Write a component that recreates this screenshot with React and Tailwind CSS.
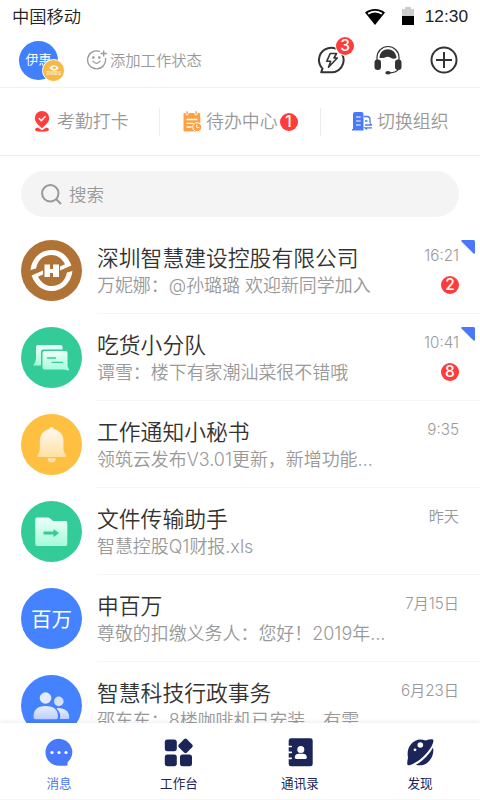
import React from 'react';

const chats = [
    { id: 1, name: '深圳智慧建设控股有限公司', text: '万妮娜：@孙璐璐 欢迎新同学加入', time: '16:21', unread: 2, pinned: true, icon: <CompanyLogo />, bg: 'bg-[#b07235]' },
    { id: 2, name: '吃货小分队', text: '谭雪：楼下有家潮汕菜很不错哦', time: '10:41', unread: 8, pinned: true, icon: <GroupChatIcon />, bg: 'bg-[#33cc99]' },
    { id: 3, name: '工作通知小秘书', text: '领筑云发布V3.01更新，新增功能…', time: '9:35', icon: <BellIcon />, bg: 'bg-[#ffbf40]' },
    { id: 4, name: '文件传输助手', text: '智慧控股Q1财报.xls', time: '昨天', icon: <FolderIcon />, bg: 'bg-[#33cc99]' },
    { id: 5, name: '申百万', text: '尊敬的扣缴义务人：您好！2019年…', time: '7月15日', icon: <span className="pt-[3px] text-[20.500px] leading-none font-normal text-white">百万</span>, bg: 'bg-[#4582ff]' },
    { id: 6, name: '智慧科技行政事务', text: '邵东东：8楼咖啡机已安装，有需', time: '6月23日', icon: <PeopleIcon />, bg: 'bg-[#4582ff]' },
];

const tabs = [
    { label: '消息', icon: <MessageTabIcon />, active: true },
    { label: '工作台', icon: <WorkTabIcon /> },
    { label: '通讯录', icon: <ContactsTabIcon /> },
    { label: '发现', icon: <DiscoverTabIcon /> },
];

function CompanyLogo() {
    return (
        <svg viewBox="0 0 61 61" className="size-full" fill="none">
            <path d="M9.500 30C11 18 19.500 10 30.500 10C39.500 10 46.500 15 50.500 25.500L39 30.500V26.500L44 24.300C40.500 18 36 15 30.500 15C22 15 17 20 15 28.500Z" fill="#fff" />
            <path d="M51.500 31C50 43 41.500 51 30.500 51C21.500 51 14.500 46 10.500 35.500L22 30.500V34.500L17 36.700C20.500 43 25 46 30.500 46C39 46 44 41 46 32.500Z" fill="#fff" />
            <path d="M23.500 24.500H29V29H32V24.500H38V37H32V33H29V37H23.500Z" fill="#fff" />
        </svg>
    );
}

function GroupChatIcon() {
    return (
        <svg viewBox="0 0 61 61" className="size-full" fill="none">
            <defs>
                <linearGradient id="mint" x1="0" y1="0" x2="0" y2="1">
                    <stop stopColor="#effff8" />
                    <stop offset="1" stopColor="#a3fbd9" />
                </linearGradient>
            </defs>
            <path d="M17 18H39.500Q41.500 18 41.500 20V22.500H22.500Q20 22.500 20 25V38.500H13Q12 38.500 12.600 37.500Q15 35 15 31V20Q15 18 17 18Z" fill="url(#mint)" />
            <path d="M23.500 24H44.500Q46.500 24 46.500 26V38Q46.500 40.500 48 42.500Q48.500 43.700 47 43.500L43 42.500H23.500Q21.500 42.500 21.500 40.500V26Q21.500 24 23.500 24Z" fill="url(#mint)" />
            <path d="M26.500 31H34.500M31 35.300H41.500" stroke="#33cc99" strokeWidth="1.300" strokeLinecap="round" />
        </svg>
    );
}

function BellIcon() {
    return (
        <svg viewBox="0 0 61 61" className="size-full" fill="none">
            <defs>
                <linearGradient id="bell" x1="0" y1="0" x2="0" y2="1">
                    <stop stopColor="#fffaf0" />
                    <stop offset="1" stopColor="#ffe0a3" />
                </linearGradient>
            </defs>
            <path d="M30.500 13Q32.600 13 33 15.300C39 16.500 42.500 21 42.500 27V35Q42.500 38 44.500 40.500Q46 43 44 43H17.500Q15.500 43 17 40.500Q18.800 38 18.800 35V27C18.800 21 22.300 16.500 28 15.300Q28.500 13 30.500 13Z" fill="url(#bell)" />
            <path d="M26.500 44.200H35Q34.500 48.500 30.700 48.500Q27 48.500 26.500 44.200Z" fill="#ffe2a8" />
        </svg>
    );
}

function FolderIcon() {
    return (
        <svg viewBox="0 0 61 61" className="size-full" fill="none">
            <path d="M16 16.500H27Q28 16.500 28.800 17.200L31.500 19.500Q32.200 20 33.200 20H44.500Q46.300 20 46.300 22V43Q46.300 45 44.500 45H16Q14.300 45 14.300 43V18.500Q14.300 16.500 16 16.500Z" fill="url(#mint)" />
            <path d="M22.500 30.600H32.500V28L38 32L32.500 36.200V33.600H22.500Z" fill="#33cc99" />
        </svg>
    );
}

function PeopleIcon() {
    return (
        <svg viewBox="0 0 61 61" className="size-full" fill="none">
            <defs>
                <linearGradient id="people" x1="0" y1="0" x2="0" y2="1">
                    <stop stopColor="#e9efff" />
                    <stop offset="1" stopColor="#bdcdff" />
                </linearGradient>
            </defs>
            <circle cx="24.500" cy="23" r="5.800" fill="#e3ebff" />
            <circle cx="37.800" cy="26.400" r="4.800" fill="#d5e0ff" />
            <path d="M37 33C44 33 48.300 36.500 48.300 42.500Q48.300 44 46.800 44H39Q40 38 36 34Q35 33 37 33Z" fill="url(#people)" />
            <path d="M12.500 42Q12.500 31 24.500 31Q37 31 37 42Q37 44.200 34.800 44.200H14.700Q12.500 44.200 12.500 42Z" fill="url(#people)" />
        </svg>
    );
}

function MessageTabIcon() {
    return (
        <svg viewBox="0 0 30 30" className="size-[30px]" fill="#4978fa">
            <path d="M15 1.800A13.500 13.500 0 1 0 15 28.800H22.500Q23.500 28.800 23.500 28V25.600A13.500 13.500 0 0 0 15 1.800Z" />
            <circle cx="8" cy="15.500" r="1.600" fill="#fff" />
            <circle cx="15" cy="15.500" r="1.600" fill="#fff" />
            <circle cx="22" cy="15.500" r="1.600" fill="#fff" />
        </svg>
    );
}

function WorkTabIcon() {
    return (
        <svg viewBox="0 0 30 30" className="size-[30px]" fill="#1b2558">
            <rect x=".8" y="2.500" width="12" height="11.700" rx="2.600" />
            <rect x="15.800" y="3.200" width="11.400" height="11.400" rx="2" transform="rotate(45 21.500 8.900)" />
            <rect x=".8" y="17.500" width="12" height="11.700" rx="2.600" />
            <rect x="16" y="17.500" width="12" height="11.700" rx="2.600" />
        </svg>
    );
}

function ContactsTabIcon() {
    return (
        <svg viewBox="0 0 30 30" className="size-[30px]" fill="#1b2558">
            <rect x="3.700" y="1.300" width="24" height="28" rx="2.400" />
            <path d="M2.500 9.500H6.200M2.500 15.400H6.200M2.500 21.300H6.200" stroke="#fff" strokeWidth="1.700" strokeLinecap="round" />
            <circle cx="15.800" cy="12.600" r="3.500" fill="#fff" />
            <path d="M9.800 20.600C9.800 17 12.500 16.700 15.800 16.700S21.800 17 21.800 20.600Q21.800 22 20.500 22H11.100Q9.800 22 9.800 20.600Z" fill="#fff" />
        </svg>
    );
}

function DiscoverTabIcon() {
    return (
        <svg viewBox="0 0 30 30" className="size-[30px]" fill="#1b2558">
            <path d="M20.500 3.600Q26.500 1.500 28 2.600Q29.300 4 26.500 9.500C22 17 13.500 25 6 27.700Q2.700 29 2.300 27.500Q2 25.500 3 20.500C.5 9 10.500-1 20.500 3.600Z" />
            <path d="M28 10.600C30 20 22 31 10.800 27.800C17.500 24.500 24.500 17.500 28 10.600Z" />
            <circle cx="15.300" cy="8" r="2.800" fill="#fff" />
            <circle cx="10" cy="12.800" r="1.400" fill="#fff" />
        </svg>
    );
}

function StatusBar() {
    return (
        <div className="flex h-[33px] shrink-0 items-center px-[12px] text-[17.300px] text-[#222]">
            <span className="pt-px">中国移动</span>
            <svg viewBox="0 0 20 16" className="ml-auto h-[16px] w-[20px]">
                <path d="M10 0C6 0 2.500 1.200 0 3.500L10 16L20 3.500C17.500 1.200 14 0 10 0Z" />
                <path d="M2.500 4Q10-.7 17.500 4L16.300 5.500Q10 1.700 3.700 5.500Z" fill="#fff" />
            </svg>
            <svg viewBox="0 0 12 18" className="mr-px mb-[2px] ml-[17px] h-[18px] w-[12px]">
                <path d="M0 2H3V0H9V2H12V9H0Z" fill="#ccc" />
                <path d="M0 9H12V18H0Z" />
            </svg>
            <span className="ml-[10px] pt-px font-['Liberation_Sans'] text-[17.300px]">12:30</span>
        </div>
    );
}

function Header() {
    return (
        <header className="flex h-[55px] shrink-0 items-center border-b border-[#f2f2f2] pr-[22px] pl-[19px]">
            <div className="relative flex size-[39px] items-center justify-center rounded-full bg-[#4080ff] text-[13px] font-normal text-white">
                伊惠
                <div className="absolute top-[18px] left-[23px] flex size-[23px] flex-col items-center justify-center rounded-full border border-white bg-[#f7b944]">
                    <svg viewBox="0 0 12 7" className="h-[6px] w-[10px]">
                        <path d="M0 3.500Q6-3 12 3.500Q6 10 0 3.500Z" fill="#fff" />
                        <ellipse cx="6.500" cy="3.300" rx="2.300" ry="1.500" fill="#f7b944" />
                    </svg>
                    <span className="h-[5px] text-[4px] leading-[5px] whitespace-nowrap">深圳建设</span>
                </div>
            </div>
            <svg viewBox="0 0 20 20" className="ml-[29px] size-[20px]" fill="none" stroke="#999" strokeWidth="1.300" strokeLinecap="round">
                <path d="M12.500 1.300A9 9 0 1 0 18.500 8.500" />
                <path d="M6 11.200Q9.500 15.500 13.200 11.200M14.200 3.500H19.300M16.700 1V6" />
                <circle cx="6.300" cy="7.500" r=".7" fill="#999" />
                <circle cx="12.300" cy="7.500" r=".7" fill="#999" />
            </svg>
            <span className="ml-[3px] pt-[2px] text-[15.300px] text-[#999]">添加工作状态</span>

            <div className="relative ml-auto size-[28px]">
                <svg viewBox="0 0 28 28" className="size-full" fill="none" stroke="#333" strokeWidth="2" strokeLinejoin="round">
                    <path d="M14 26.300H3.200L4.500 22.600A12.300 12.300 0 1 1 14 26.300Z" />
                    <path d="M12.200 7.500H18.500L16 12H19.300L10.500 21.200L12.700 15.300H8.700Z" strokeWidth="1.600" />
                </svg>
                <Badge count={3} className="absolute top-[-9px] left-[18px] ring-1 ring-white" />
            </div>
            <svg viewBox="0 0 28 30" className="ml-[28px] h-[30px] w-[28px]" fill="#333">
                <path d="M3 15V12.500A11 11 0 0 1 25 12.500V15" fill="none" stroke="#333" strokeWidth="1.200" />
                <rect x=".5" y="14.500" width="6.500" height="10.500" rx="3" />
                <rect x="21" y="14.500" width="6.500" height="10.500" rx="3" />
                <path d="M5.500 12.800C6 1.500 21.500 1.500 22.500 12.800C18 16 15.500 9.500 11 12.500Q8 13.500 5.500 12.800Z" />
                <path d="M24.500 24Q22.500 27.500 16 27.800" fill="none" stroke="#333" strokeWidth="1.200" />
                <ellipse cx="14" cy="27.700" rx="2.700" ry="1.700" />
            </svg>
            <svg viewBox="0 0 28 28" className="ml-[28px] size-[28px]" fill="none" stroke="#333" strokeWidth="2">
                <circle cx="14" cy="14" r="12.500" />
                <path d="M14 6V22M6 14H22" />
            </svg>
        </header>
    );
}

function Badge({ count, className = '' }) {
    return (
        <span className={`flex size-[18px] items-center justify-center rounded-full bg-[#ff3b3b] font-['Inter'] text-[15.500px] leading-none font-medium text-white ${className}`}>
            {count}
        </span>
    );
}

function QuickActions() {
    return (
        <div className="flex h-[68px] shrink-0 items-center border-b border-[#ececec] text-[17.900px] text-[#999]">
            <div className="flex h-[28px] w-[160px] items-center border-r border-[#eee] pl-[34px]">
                <svg viewBox="0 0 16 21" className="h-[21px] w-[16px]" fill="#ff3d3d">
                    <path d="M8 0A7.200 7.200 0 0 1 15.200 7.200C15.200 11 11 14.500 8 17.300C5 14.500 .8 11 .8 7.200A7.200 7.200 0 0 1 8 0Z" />
                    <path d="M4.800 7.300L7.300 9.600L11.500 5.300" fill="none" stroke="#fff" strokeWidth="1.500" />
                    <path d="M3.800 16.500L8 19.300L12.200 16.500Q15 17 15 18.500Q15 20.700 8 20.700T1 18.500Q1 17 3.800 16.500Z" />
                </svg>
                <span className="ml-[7px] pt-[2px]">考勤打卡</span>
            </div>
            <div className="flex h-[28px] w-[161px] items-center border-r border-[#eaeaf3] pl-[23px]">
                <svg viewBox="0 0 19 21" className="h-[21px] w-[19px]" fill="#ffa040">
                    <path d="M1.500 2H2.500V3Q4 6 5.700 3V2H11.500V3Q13 6 14.700 3V2H16.200Q17.200 2 17.200 3V20.500H1.500Q.5 20.500 .5 19.500V3Q.5 2 1.500 2Z" />
                    <path d="M4.100 .3V3.500M13.100 .3V3.500" stroke="#ffa040" strokeWidth="1.400" />
                    <path d="M3.500 8.500H14.500M3.500 12.300H10.500M3.500 16H8.500" stroke="#fff" strokeWidth="1.300" />
                    <circle cx="14.200" cy="16.200" r="4.500" stroke="#fff" />
                    <path d="M13.800 13.600V16.700H16.500" fill="none" stroke="#fff" />
                </svg>
                <span className="ml-[4px] pt-[2px]">待办中心</span>
                <Badge count={1} className="ml-[2px]" />
            </div>
            <div className="flex items-center pl-[31px]">
                <svg viewBox="0 0 20 19" className="h-[19px] w-[20px]" fill="#4978fa">
                    <path d="M0 17H1V2Q1 0 3 0H9.500Q11.500 0 11.500 2V18.500H0Z" />
                    <path d="M4 5H8.700M4 9H8.700M4 13H8.700" stroke="#fff" strokeWidth="1.200" />
                    <path d="M12 4.500H15Q18 4.500 18 8V11M13 9H15.500M13 13H20L18 11.500M20 15.800H13L15 17.500" fill="none" stroke="#4978fa" strokeWidth="1.300" />
                </svg>
                <span className="ml-[5px] pt-[2px]">切换组织</span>
            </div>
        </div>
    );
}

function ChatRow({ chat }) {
    return (
        <div className="relative flex h-[87px] shrink-0 pl-[21px]">
            <div className={`mt-[13px] flex size-[61px] shrink-0 items-center justify-center rounded-full ${chat.bg}`}>
                {chat.icon}
            </div>
            <div className="ml-[15px] flex flex-1 border-b border-[#f5f5f5] pr-[21px]">
                <div className="flex-1 pt-[18px] whitespace-nowrap">
                    <p className="text-[21.800px] leading-[27px] text-[#333]">{chat.name}</p>
                    <p className="text-[17.950px] leading-[28px] text-[#999]">{chat.text}</p>
                </div>
                <div className="flex flex-col items-end pt-[19px]">
                    <span className="text-[15.200px] leading-[20px] text-[#999]">{chat.time}</span>
                    {chat.unread && <Badge count={chat.unread} className="mt-[10px]" />}
                </div>
            </div>
            {chat.pinned && (
                <svg viewBox="0 0 14 14" className="absolute top-[13px] right-[5px] size-[14px]">
                    <path d="M1 0H12.500Q14 0 14 1.500V13Q13.500 14.300 12.500 13.500L.5 1.500Q0 .3 1 0Z" fill="#4978fa" />
                </svg>
            )}
        </div>
    );
}

export default function App() {
    return (
        <div className="flex h-[800px] w-[480px] flex-col overflow-hidden bg-white font-['Inter','Noto_Sans_CJK_SC',sans-serif] font-[350]">
            <StatusBar />
            <Header />
            <QuickActions />
            <div className="mx-[21px] mt-[15px] mb-[10px] flex h-[46px] shrink-0 items-center rounded-full bg-[#f4f4f4] pl-[20px] text-[17.500px] text-[#999]">
                <svg viewBox="0 0 21 21" className="size-[21px]" fill="none" stroke="#999" strokeWidth="2">
                    <circle cx="9.300" cy="9.300" r="8.200" />
                    <path d="M15 15L20 20" />
                </svg>
                <span className="ml-[7px] pt-[2px]">搜索</span>
            </div>
            <main className="flex min-h-0 flex-1 flex-col overflow-hidden">
                {chats.map((chat) => (
                    <ChatRow key={chat.id} chat={chat} />
                ))}
            </main>
            <nav className="z-10 grid h-[77px] shrink-0 grid-cols-[118px_122px_120px_120px] border-b border-[#f4f6fc] bg-white shadow-[0_-1px_5px_rgba(0,0,0,0.08)]">
                {tabs.map((tab) => (
                    <div key={tab.label} className="flex flex-col items-center pt-[14px]">
                        {tab.icon}
                        <span className={`mt-[7px] text-[12.600px] leading-[20px] font-normal ${tab.active ? 'text-[#4978fa]' : 'text-[#1b2558]'}`}>
                            {tab.label}
                        </span>
                    </div>
                ))}
            </nav>
        </div>
    );
}
